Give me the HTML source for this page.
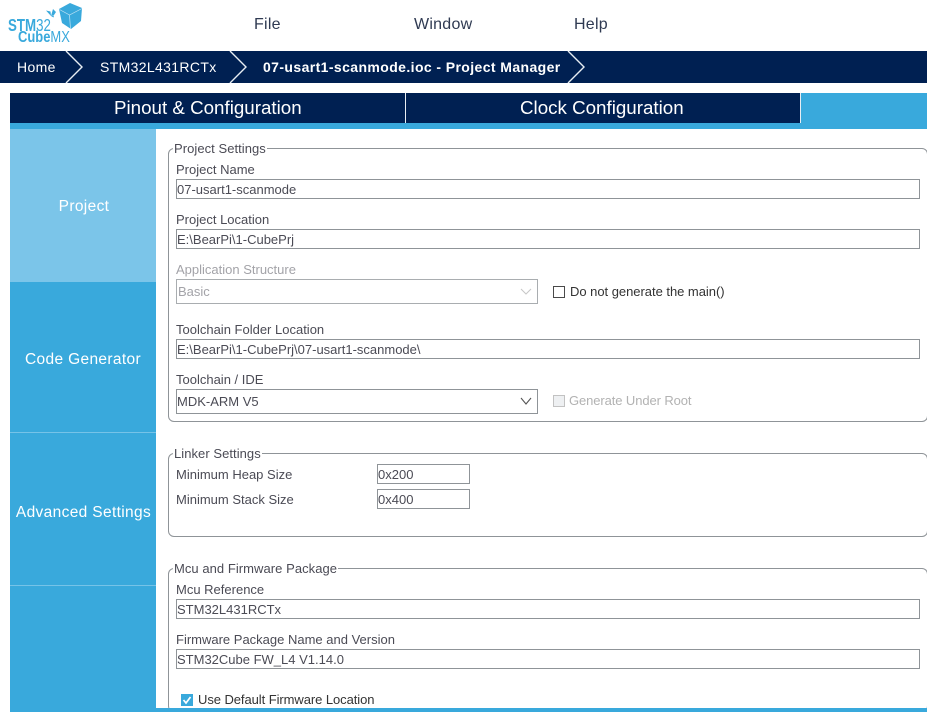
<!DOCTYPE html>
<html><head><meta charset="utf-8"><style>
html,body{margin:0;padding:0;background:#fff;width:927px;height:712px;overflow:hidden}
body{position:relative;font-family:"Liberation Sans",sans-serif}
#w{position:absolute;left:0;top:0;width:927px;height:712px;overflow:hidden}
.a,.t,.i,.fs{position:absolute;box-sizing:border-box}
.t{white-space:nowrap;font-size:13px;line-height:14px;color:#4b4b55}
.i{border:1px solid #8f9498;background:#fff;height:20px;font-size:13px;line-height:20px;padding-left:0;color:#4b4b55;white-space:nowrap}
.fs{left:168px;width:760px;border:1px solid #8f9498;border-radius:6px}
.lg{position:absolute;left:4px;top:-7px;background:#fff;padding:0 1px;font-size:13px;line-height:14px;color:#4b4b55;white-space:nowrap;letter-spacing:.05px}
.m{font-size:16px;line-height:20px;color:#2f3a52;letter-spacing:.25px}
.s{color:#fff;font-size:15.5px;line-height:20px;width:146px;left:10px;text-align:center;letter-spacing:.35px;font-weight:normal}
.b{color:#fff;font-size:14px;line-height:18px;letter-spacing:.35px}
.h{color:#fff;font-size:18.75px;line-height:22px}
</style></head><body><div id="w">

<div class="t" style="left:8px;top:16px;font-size:17.5px;line-height:18px;font-weight:bold;color:#39a9dc;transform:scaleX(.76);transform-origin:0 0">STM<span style="font-weight:normal">32</span></div>
<div class="t" style="left:18px;top:30px;font-size:16px;line-height:16px;font-weight:bold;color:#39a9dc;transform:scaleX(.81);transform-origin:0 0">Cube<span style="font-weight:normal">MX</span></div>
<svg class="a" style="left:0;top:0" width="90" height="48" viewBox="0 0 90 48">
<path d="M59 9L70 3 82 8 81 21 71 29 62 23z" fill="#39a9dc"/>
<path d="M59.500 9.500L69.500 15 82 8.500M69.500 15L70.500 29" fill="none" stroke="#c5e5f5" stroke-width=".7"/>
<path d="M51 16L46 10.500 50.500 11.500zM51 16L53 9 56 12 54 15zM51 16L54 15.500 53.500 17.500z" fill="#39a9dc"/>
</svg>

<div class="t m" style="left:254px;top:15px">File</div>
<div class="t m" style="left:414px;top:15px">Window</div>
<div class="t m" style="left:574px;top:15px">Help</div>

<div class="a" style="left:0;top:51px;width:927px;height:32px;background:#002052"></div>
<svg class="a" style="left:0;top:51px" width="927" height="32" viewBox="0 0 927 32" fill="none" stroke="#e8edf3" stroke-width="1.4">
<path d="M66 0L82 16 66 32M230 0L246 16 230 32M568 0L584 16 568 32"/>
</svg>
<div class="t b" style="left:17px;top:58px">Home</div>
<div class="t b" style="left:100px;top:58px">STM32L431RCTx</div>
<div class="t b" style="left:263px;top:58px;font-weight:bold;letter-spacing:.4px">07-usart1-scanmode.ioc - Project Manager</div>

<div class="a" style="left:10px;top:93px;width:917px;height:36px;background:#39a9dc"></div>
<div class="a" style="left:10px;top:93px;width:791px;height:30px;background:#002052"></div>
<div class="a" style="left:405px;top:93px;width:1px;height:30px;background:#e8edf3"></div>
<div class="a" style="left:800px;top:93px;width:1px;height:30px;background:#e8edf3"></div>
<div class="t h" style="left:114px;top:97px">Pinout &amp; Configuration</div>
<div class="t h" style="left:520px;top:97px">Clock Configuration</div>

<div class="a" style="left:10px;top:129px;width:146px;height:580px;background:#39a9dc"></div>
<div class="a" style="left:10px;top:129px;width:146px;height:153px;background:#7bc5e9"></div>
<div class="a" style="left:10px;top:432px;width:146px;height:1px;background:#76c3e8"></div>
<div class="a" style="left:10px;top:585px;width:146px;height:1px;background:#76c3e8"></div>
<div class="t s" style="top:197px;left:11px">Project</div>
<div class="t s" style="top:350px">Code Generator</div>
<div class="t s" style="top:503px;left:10.500px">Advanced Settings</div>

<div class="fs" style="top:148px;height:274px"><div class="lg">Project Settings</div></div>
<div class="t" style="left:176px;top:163px">Project Name</div>
<div class="i" style="left:176px;top:179px;width:744px">07-usart1-scanmode</div>
<div class="t" style="left:176px;top:213px">Project Location</div>
<div class="i" style="left:176px;top:229px;width:744px">E:\BearPi\1-CubePrj</div>
<div class="t" style="left:176px;top:263px;color:#a3a3a8">Application Structure</div>
<div class="i" style="left:176px;top:279px;width:362px;height:25px;line-height:23px;color:#a3a3a8;border-color:#a9adb0;padding-left:1px">Basic</div>
<svg class="a" style="left:520px;top:287px" width="16" height="10" fill="none" stroke="#c8c8c8" stroke-width="1.1"><path d="M1 2l5 5 5-5"/></svg>
<div class="a" style="left:553px;top:286px;width:12px;height:12px;border:1px solid #4a4a4a;background:#fff"></div>
<div class="t" style="left:570px;top:285px;color:#333;letter-spacing:-.03px">Do not generate the main()</div>
<div class="t" style="left:176px;top:323px">Toolchain Folder Location</div>
<div class="i" style="left:176px;top:339px;width:744px">E:\BearPi\1-CubePrj\07-usart1-scanmode\</div>
<div class="t" style="left:176px;top:373px">Toolchain / IDE</div>
<div class="i" style="left:176px;top:389px;width:362px;height:25px;line-height:23px">MDK-ARM V5</div>
<svg class="a" style="left:520px;top:396px" width="16" height="10" fill="none" stroke="#555" stroke-width="1.1"><path d="M1 2l5 6 5-6"/></svg>
<div class="a" style="left:553px;top:395px;width:12px;height:12px;border:1px solid #c2c2c2;background:#eef0f2"></div>
<div class="t" style="left:569px;top:394px;color:#b2b2b2;letter-spacing:-.1px">Generate Under Root</div>

<div class="fs" style="top:453px;height:84px"><div class="lg">Linker Settings</div></div>
<div class="t" style="left:176px;top:468px">Minimum Heap Size</div>
<div class="i" style="left:377px;top:464px;width:93px">0x200</div>
<div class="t" style="left:176px;top:493px">Minimum Stack Size</div>
<div class="i" style="left:377px;top:489px;width:93px">0x400</div>

<div class="fs" style="top:568px;border-bottom:0;height:144px"><div class="lg">Mcu and Firmware Package</div></div>
<div class="t" style="left:176px;top:583px">Mcu Reference</div>
<div class="i" style="left:176px;top:599px;width:744px">STM32L431RCTx</div>
<div class="t" style="left:176px;top:633px">Firmware Package Name and Version</div>
<div class="i" style="left:176px;top:649px;width:744px">STM32Cube FW_L4 V1.14.0</div>
<div class="a" style="left:181px;top:694px;width:12px;height:12px;background:#39a9dc"></div>
<svg class="a" style="left:181px;top:694px" width="12" height="12" fill="none" stroke="#fff" stroke-width="1.7"><path d="M2.500 6l2.500 3 4.500-6"/></svg>
<div class="t" style="left:198px;top:693px;color:#333;letter-spacing:-.07px">Use Default Firmware Location</div>
<div class="a" style="left:10px;top:708px;width:917px;height:4px;background:#39a9dc"></div>
</div></body></html>
